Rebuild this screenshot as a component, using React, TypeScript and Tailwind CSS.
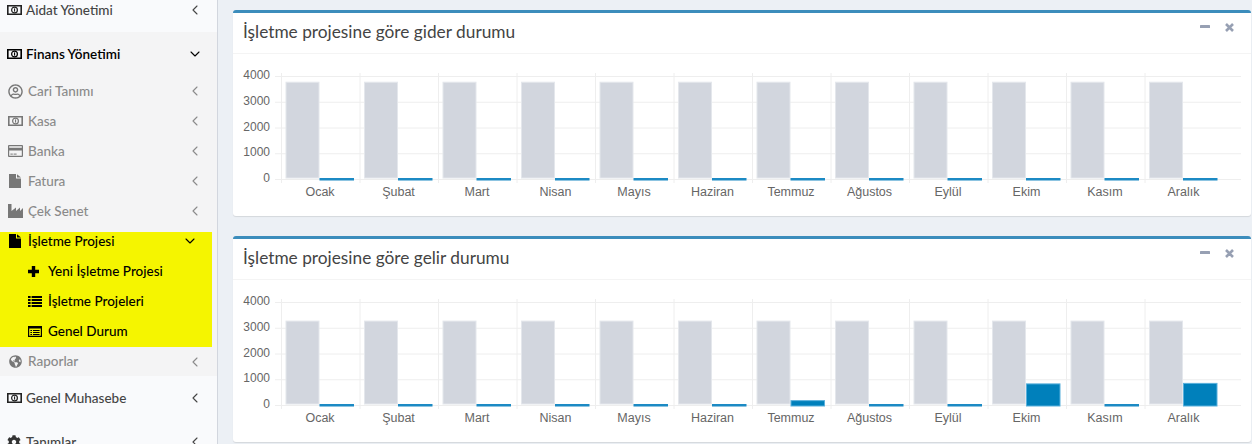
import type { ReactNode } from 'react'
import { FaCog, FaGlobeAmericas, FaRegUserCircle } from 'react-icons/fa'
import { ChevronDown, ChevronLeft } from 'lucide-react'

const months = ['Ocak', 'Şubat', 'Mart', 'Nisan', 'Mayıs', 'Haziran', 'Temmuz', 'Ağustos', 'Eylül', 'Ekim', 'Kasım', 'Aralık']

const PLOT_LEFT = 48.5
const STEP = 78.5
const ZERO_Y = 125.5
const UNIT = 25.75 / 1000

function MoneyIcon({ className }: { className: string }) {
  return (
    <svg className={className} width="15" height="10" viewBox="0 0 15 10" fill="currentColor">
      <path fillRule="evenodd" d="M0 0h15v10H0z M1.6 1.6v6.8h11.8V1.6z" />
      <circle cx="7.5" cy="5" r="2.9" fill="none" stroke="currentColor" strokeWidth="1.2" />
      <rect x="7" y="3.4" width="1.1" height="3.2" />
    </svg>
  )
}

function FileIcon({ className }: { className: string }) {
  return (
    <svg className={className} width="12" height="14" viewBox="0 0 12 14" fill="currentColor">
      <path d="M0 0h7v4.5h5V14H0z M8 0.2l4 3.3H8z" />
    </svg>
  )
}

function CardIcon({ className }: { className: string }) {
  return (
    <svg className={className} width="15" height="12" viewBox="0 0 15 12" fill="currentColor">
      <path fillRule="evenodd" d="M1 0h13a1 1 0 0 1 1 1v10a1 1 0 0 1-1 1H1a1 1 0 0 1-1-1V1a1 1 0 0 1 1-1z M1.2 5.4v5.4h12.6V5.4z M1.2 1.2v1.6h12.6V1.2z" />
      <rect x="2.4" y="8.6" width="2.4" height="1" />
      <rect x="5.6" y="8.6" width="3" height="1" />
    </svg>
  )
}

function FactoryIcon({ className }: { className: string }) {
  return (
    <svg className={className} width="15" height="14" viewBox="0 0 15 14" fill="currentColor">
      <path d="M0 0h3.5v7L8 3.5V7l4-3.5V7l3-3v10H0z" />
    </svg>
  )
}

function PlusIcon() {
  return (
    <svg className="mr-[9px] shrink-0" width="11" height="11" viewBox="0 0 11 11" fill="currentColor">
      <path d="M3.8 0h3.4v3.8H11v3.4H7.2V11H3.8V7.2H0V3.8h3.8z" />
    </svg>
  )
}

function ListIcon() {
  return (
    <svg className="mr-[6px] shrink-0" width="14" height="11" viewBox="0 0 14 11" fill="currentColor">
      {[0, 3, 6, 9].map((y) => (
        <g key={y}>
          <rect x="0" y={y} width="2.6" height="2" />
          <rect x="3.6" y={y} width="10.4" height="2" />
        </g>
      ))}
    </svg>
  )
}

function ListAltIcon() {
  return (
    <svg className="mr-[6px] shrink-0" width="14" height="11" viewBox="0 0 14 11" fill="currentColor">
      <path fillRule="evenodd" d="M0 0h14v11H0z M1.2 2.6v7.2h11.6V2.6z" />
      {[4, 6, 8].map((y) => (
        <g key={y}>
          <rect x="2.4" y={y} width="1.6" height="1" />
          <rect x="5" y={y} width="6.6" height="1" />
        </g>
      ))}
    </svg>
  )
}

interface MenuRowProps {
  icon: ReactNode
  label: string
  className: string
  labelClass?: string
  open?: boolean
}

function MenuRow({ icon, label, className, labelClass, open }: MenuRowProps) {
  return (
    <div className={`flex items-center pr-[14px] ${className}`}>
      <span className="flex w-5 shrink-0 items-center justify-center">{icon}</span>
      <span className={`flex-1 truncate ${labelClass ?? ''}`}>{label}</span>
      {open ? <ChevronDown size={16} strokeWidth={1.6} /> : <ChevronLeft size={16} strokeWidth={1.6} />}
    </div>
  )
}

function Sidebar() {
  const top = 'h-[44px] pl-[4px] text-[#444] font-medium'
  const sub = 'h-[30px] pl-[5px] text-[#8a8a8a] font-medium'
  const child = 'flex h-[30px] items-center pl-[28px] font-medium text-black'
  return (
    <aside className="h-full w-[218px] shrink-0 overflow-hidden border-r border-[#d2d6de] bg-[#f9fafc] text-[13.5px]">
      <div className="-mt-[12px]">
        <MenuRow className={top} icon={<MoneyIcon className="text-[#222]" />} label="Aidat Yönetimi" labelClass="pl-[2px]" />
      </div>
      <div className="bg-[#f4f4f5]">
        <MenuRow className={`${top} text-black`} icon={<MoneyIcon className="text-black" />} label="Finans Yönetimi" labelClass="pl-[2px] font-semibold text-black" open />
        <MenuRow className={sub} icon={<FaRegUserCircle className="h-[15px] w-[15px] text-[#777]" />} label="Cari Tanımı" labelClass="pl-[3px]" />
        <MenuRow className={sub} icon={<MoneyIcon className="text-[#777]" />} label="Kasa" labelClass="pl-[3px]" />
        <MenuRow className={sub} icon={<CardIcon className="text-[#777]" />} label="Banka" labelClass="pl-[3px]" />
        <MenuRow className={sub} icon={<FileIcon className="text-[#777]" />} label="Fatura" labelClass="pl-[3px]" />
        <MenuRow className={sub} icon={<FactoryIcon className="text-[#777]" />} label="Çek Senet" labelClass="pl-[3px]" />
        <div className="mt-[6px] h-[115px] w-[212px] bg-[#f5f500]">
          <MenuRow className="h-[18px] pl-[5px] pr-[9px] font-medium text-black" icon={<FileIcon className="" />} label="İşletme Projesi" labelClass="pl-[3px]" open />
          <div className={`${child} mt-[6px]`}>
            <PlusIcon />
            Yeni İşletme Projesi
          </div>
          <div className={child}>
            <ListIcon />
            İşletme Projeleri
          </div>
          <div className={child}>
            <ListAltIcon />
            Genel Durum
          </div>
        </div>
        <MenuRow className="h-[29px] pl-[5px] font-medium text-[#8a8a8a]" icon={<FaGlobeAmericas className="h-[13px] w-[13px] text-[#777]" />} label="Raporlar" labelClass="pl-[3px]" />
      </div>
      <MenuRow className={top} icon={<MoneyIcon className="text-[#222]" />} label="Genel Muhasebe" labelClass="pl-[2px]" />
      <MenuRow className={top} icon={<FaCog className="h-[14px] w-[14px] text-[#333]" />} label="Tanımlar" labelClass="pl-[2px]" />
    </aside>
  )
}

function BarChart({ gray, values }: { gray: number; values: number[] }) {
  const ticks = [0, 1000, 2000, 3000, 4000]
  return (
    <svg className="block" width="1018" height="152" viewBox="0 0 1018 152" fontFamily="'Liberation Sans', Arial, sans-serif" fontSize="12">
      {ticks.map((t) => {
        const y = ZERO_Y - t * UNIT
        return (
          <g key={t}>
            <line x1={42} x2={1008} y1={y} y2={y} stroke="#eeeeee" />
            <text x={37} y={y + 2.5} textAnchor="end" fill="#666">
              {t}
            </text>
          </g>
        )
      })}
      {months.map((m, i) => {
        const x = PLOT_LEFT + i * STEP
        const h = values[i] * UNIT
        return (
          <g key={m}>
            <line x1={x} x2={x} y1={19} y2={129} stroke="#eeeeee" />
            <rect x={x + 4.5} y={124 - gray * UNIT} width={33} height={gray * UNIT} fill="#d2d6de" stroke="#e4e7ec" />
            {values[i] === 0 ? (
              <rect x={x + 38} y={124} width={34.5} height={2.5} fill="#1c8ac4" />
            ) : (
              <rect x={x + 38.5} y={124.5 - h} width={33.5} height={h + 1.5} fill="#0080bb" stroke="#59b0dc" />
            )}
            <text x={x + 38.5} y={142} textAnchor="middle" fill="#666" fontSize="12.5">
              {m}
            </text>
          </g>
        )
      })}
    </svg>
  )
}

function ChartBox({ title, gray, values }: { title: string; gray: number; values: number[] }) {
  return (
    <section className="h-[206px] overflow-hidden rounded-[3px] border-t-[3px] border-[#3c8dbc] bg-white shadow-[0_1px_1px_rgba(0,0,0,0.1)]">
      <header className="flex h-[41px] items-center justify-between border-b border-[#f4f4f4] pl-[10px] pr-[17px] text-[#444]">
        <h3 className="pb-[2px] text-[17.3px] leading-none">{title}</h3>
        <div className="mb-[11px] flex items-center gap-[15px] text-[#97a0b3]">
          <svg width="10" height="3" viewBox="0 0 10 3" fill="currentColor" className="mb-[3px]">
            <rect width="10" height="3" rx="0.5" />
          </svg>
          <svg width="9" height="9" viewBox="0 0 9 9" stroke="currentColor" strokeWidth="2.6">
            <path d="M1 1l7 7M8 1l-7 7" />
          </svg>
        </div>
      </header>
      <BarChart gray={gray} values={values} />
    </section>
  )
}

export default function App() {
  return (
    <div className="flex h-[444px] w-[1252px] overflow-hidden bg-[#ecf0f5] font-['Lato',sans-serif]">
      <Sidebar />
      <main className="flex-1 pl-[15px] pr-[1px] pt-[10px]">
        <div className="flex flex-col gap-[20px]">
          <ChartBox title="İşletme projesine göre gider durumu" gray={3720} values={[0, 0, 0, 0, 0, 0, 0, 0, 0, 0, 0, 0]} />
          <ChartBox title="İşletme projesine göre gelir durumu" gray={3220} values={[0, 0, 0, 0, 0, 0, 150, 0, 0, 800, 0, 820]} />
        </div>
      </main>
    </div>
  )
}
